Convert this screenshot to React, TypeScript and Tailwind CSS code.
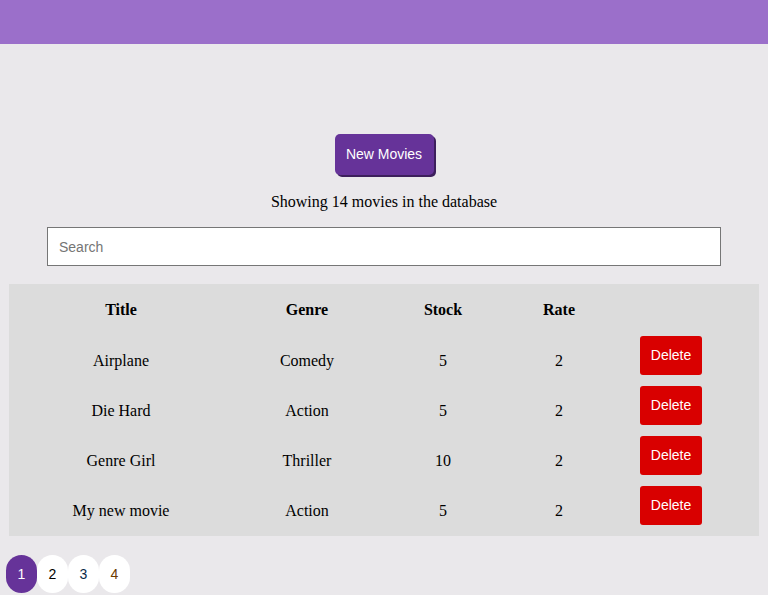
import React from 'react';

const App = () => {
  const movies = [
    { title: 'Airplane', genre: 'Comedy', stock: 5, rate: 2 },
    { title: 'Die Hard', genre: 'Action', stock: 5, rate: 2 },
    { title: 'Genre Girl', genre: 'Thriller', stock: 10, rate: 2 },
    { title: 'My new movie', genre: 'Action', stock: 5, rate: 2 },
  ];
  const pages = [
    { n: 1, color: 'text-white bg-[#663399]' },
    { n: 2, color: 'text-black bg-white' },
    { n: 3, color: 'text-[#0b2a4a] bg-white' },
    { n: 4, color: 'text-[#6b3a00] bg-white' },
  ];

  return (
    <div className="min-h-[595px] bg-[#eae8eb] font-['Liberation_Serif',serif] text-black">
      <div className="h-[44px] bg-[#9b6fca]"></div>

      <div className="flex flex-col items-center pt-[90px]">
        <button className="h-[41px] w-[99px] rounded-[5px] bg-[#663399] font-['Liberation_Sans',Arial,sans-serif] text-[14px] text-white shadow-[2px_2px_0_#3d1f5c]">
          New Movies
        </button>
        <p className="mt-[17px] text-[16px] leading-[20px]">Showing 14 movies in the database</p>
      </div>

      <div className="px-[47px] pt-[15px]">
        <input
          placeholder="Search"
          className="h-[39px] w-full border border-[#767676] bg-white px-[11px] font-['Liberation_Sans',Arial,sans-serif] text-[14px] placeholder:text-[#757575] outline-none"
        />
      </div>

      <div className="px-[9px] pt-[18px]">
        <div className="bg-[#dcdcdc] py-[1px]">
          <table className="w-[750px] table-fixed border-collapse text-[16px]">
            <colgroup>
              <col className="w-[224px]" />
              <col className="w-[148px]" />
              <col className="w-[124px]" />
              <col className="w-[108px]" />
              <col className="w-[146px]" />
            </colgroup>
            <thead>
              <tr className="h-[50px] font-bold">
                <th>Title</th>
                <th>Genre</th>
                <th>Stock</th>
                <th>Rate</th>
                <th></th>
              </tr>
            </thead>
            <tbody>
              {movies.map((m) => (
                <tr key={m.title} className="h-[50px] text-center">
                  <td className="pt-[1px]">{m.title}</td>
                  <td className="pt-[1px]">{m.genre}</td>
                  <td className="pt-[1px]">{m.stock}</td>
                  <td className="pt-[1px]">{m.rate}</td>
                  <td className="pl-[27px] pt-[1px] text-left align-top">
                    <button className="h-[39px] w-[62px] rounded-[3px] bg-[#d90000] font-['Liberation_Sans',Arial,sans-serif] text-[14px] text-white">
                      Delete
                    </button>
                  </td>
                </tr>
              ))}
            </tbody>
          </table>
        </div>
      </div>

      <div className="flex pl-[6px] pt-[19px]">
        {pages.map((p) => (
          <div
            key={p.n}
            className={`flex h-[38px] w-[31px] items-center justify-center rounded-full font-['Liberation_Sans',Arial,sans-serif] text-[14px] ${p.color}`}
          >
            {p.n}
          </div>
        ))}
      </div>
    </div>
  );
};

export default App;
